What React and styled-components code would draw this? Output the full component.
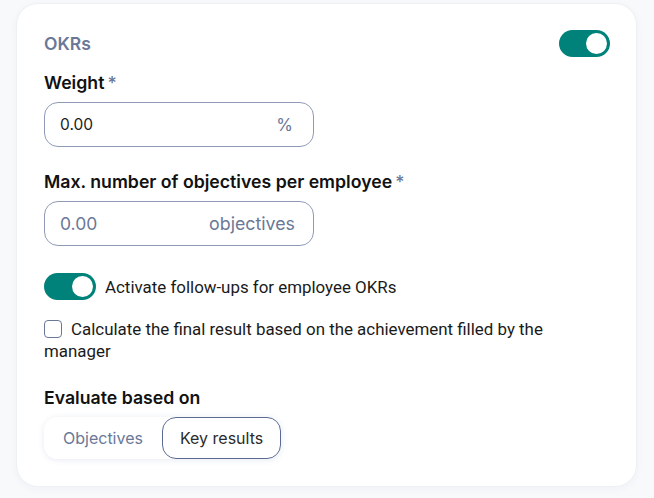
import React, { useState } from "react";
import styled, { createGlobalStyle } from "styled-components";

const Global = createGlobalStyle`
  body {
    margin: 0;
    background: #f8f9fb;
    font-family: Inter, "Noto Sans", sans-serif;
  }
`;

const Page = styled.div`
  padding: 3px 17px 12px 16px;
`;

const Card = styled.div`
  background: #fff;
  border: 1px solid #eef1f4;
  border-radius: 22px;
  box-shadow: 0 2px 8px rgba(30, 50, 90, 0.04);
  padding: 26px 26px 27px 27px;
  display: flex;
  flex-direction: column;
  align-items: flex-start;
`;

const HeaderRow = styled.div`
  display: flex;
  align-items: center;
  justify-content: space-between;
  align-self: stretch;
`;

const Title = styled.div`
  font-size: 17.5px;
  font-weight: 600;
  color: #6a7898;
`;

const Track = styled.button`
  width: ${(p) => (p.$wide ? 52 : 51)}px;
  height: 27px;
  border-radius: 14px;
  border: none;
  padding: 3px;
  background: ${(p) => (p.$on ? "#00827b" : "#c7cedb")};
  display: flex;
  justify-content: ${(p) => (p.$on ? "flex-end" : "flex-start")};
  cursor: pointer;
  flex-shrink: 0;
`;

const Knob = styled.span`
  width: 21px;
  height: 21px;
  border-radius: 50%;
  background: #fff;
`;

const Label = styled.div`
  font-size: 17.7px;
  font-weight: 600;
  color: #111;
  line-height: 22px;
  margin-top: ${(p) => p.$top}px;
`;

const Star = styled.span`
  color: #6a7898;
  margin-left: 3px;
  font-weight: 500;
`;

const Field = styled.div`
  margin-top: 8px;
  width: 270px;
  height: 45px;
  box-sizing: border-box;
  border: 1px solid #8f9bb6;
  border-radius: 14px;
  display: flex;
  align-items: center;
  justify-content: space-between;
  padding: 0 18px 0 15px;
`;

const Value = styled.span`
  color: ${(p) => (p.$muted ? "#6a7898" : "#1a1a1a")};
  font-size: ${(p) => (p.$muted ? 17.5 : 15.5)}px;
`;

const Unit = styled.span`
  color: #6a7898;
  font-size: ${(p) => (p.$big ? 17.8 : 17)}px;
  margin-right: ${(p) => (p.$big ? 0 : 2)}px;
`;

const ToggleRow = styled.div`
  margin-top: 27px;
  display: flex;
  align-items: center;
  gap: 9px;
  font-family: Roboto, sans-serif;
  font-size: 16.9px;
  color: #1a1a1a;
`;

const CheckRow = styled.label`
  margin-top: 18px;
  display: block;
  max-width: 560px;
  font-family: Roboto, sans-serif;
  font-size: 16.9px;
  line-height: 22px;
  color: #1a1a1a;
`;

const Box = styled.span`
  display: inline-block;
  width: 16px;
  height: 16px;
  border: 1.5px solid #6a7898;
  border-radius: 4px;
  vertical-align: -3px;
  margin: 0 9px 0 0;
`;

const Segmented = styled.div`
  margin-top: 8px;
  display: flex;
  align-items: center;
  height: 42px;
  border-radius: 14px;
  background: #fff;
  box-shadow: 0 1px 6px rgba(60, 80, 140, 0.12);
`;

const Segment = styled.button`
  height: 42px;
  box-sizing: border-box;
  border-radius: 14px;
  border: 1px solid ${(p) => (p.$active ? "#5b6b95" : "transparent")};
  background: #fff;
  font-family: Inter, sans-serif;
  font-size: 16px;
  white-space: nowrap;
  color: ${(p) => (p.$active ? "#2b2b2b" : "#6a7898")};
  padding: 0 ${(p) => (p.$active ? 17 : 18)}px;
  cursor: pointer;
`;

export default function App() {
  const [okrs, setOkrs] = useState(true);
  const [followUps, setFollowUps] = useState(true);
  const [mode, setMode] = useState("key");

  return (
    <Page>
      <Global />
      <Card>
        <HeaderRow>
          <Title>OKRs</Title>
          <Track $on={okrs} onClick={() => setOkrs(!okrs)}>
            <Knob />
          </Track>
        </HeaderRow>

        <Label $top={15}>
          Weight<Star>*</Star>
        </Label>
        <Field>
          <Value>0.00</Value>
          <Unit>%</Unit>
        </Field>

        <Label $top={24}>
          Max. number of objectives per employee<Star>*</Star>
        </Label>
        <Field>
          <Value $muted>0.00</Value>
          <Unit $big>objectives</Unit>
        </Field>

        <ToggleRow>
          <Track $wide $on={followUps} onClick={() => setFollowUps(!followUps)}>
            <Knob />
          </Track>
          Activate follow-ups for employee OKRs
        </ToggleRow>

        <CheckRow>
          <Box />
          Calculate the final result based on the achievement filled by the manager
        </CheckRow>

        <Label $top={25}>Evaluate based on</Label>
        <Segmented>
          <Segment $active={mode === "obj"} onClick={() => setMode("obj")}>
            Objectives
          </Segment>
          <Segment $active={mode === "key"} onClick={() => setMode("key")}>
            Key results
          </Segment>
        </Segmented>
      </Card>
    </Page>
  );
}
